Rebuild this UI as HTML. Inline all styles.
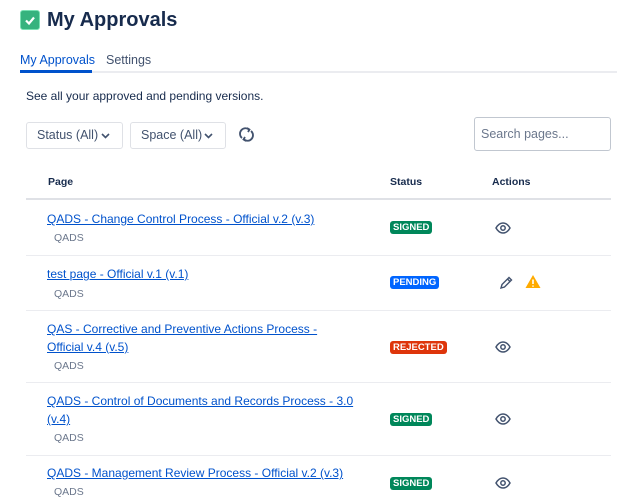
<!DOCTYPE html>
<html><head><style>
*{margin:0;padding:0;box-sizing:border-box}
body{width:640px;height:496px;overflow:hidden;background:#fff;font-family:"Liberation Sans",sans-serif;color:#172b4d;position:relative}
.a{position:absolute}
.lnk{color:#0052cc;text-decoration:underline;font-size:12px;line-height:18px}
.q{font-size:10.5px;color:#6b778c}
.b{position:absolute;left:390px;height:13px;padding:0 3px;border-radius:3px;color:#fff;font-size:9.5px;font-weight:bold;line-height:13px}
.line{position:absolute;left:26px;width:585px;height:1px;background:#ebecf0}
.sel{position:absolute;top:122px;height:27px;border:1px solid #dfe1e6;border-radius:3px;font-size:12.5px;color:#42526e;line-height:25px;padding-left:10px}
.sel svg{position:absolute;right:12px;top:10px}
</style></head><body>
<div class="a" style="left:20px;top:10px;width:20px;height:20px;background:#36b37e;border-radius:3px;border:1px solid #79e2b3"></div>
<svg class="a" style="left:20px;top:10px" width="20" height="20"><path d="M6 10.5l3 3 5-6" stroke="#fff" stroke-width="2.2" fill="none"/></svg>
<div class="a" style="left:47px;top:9px;font-size:20px;font-weight:bold;color:#172b4d">My Approvals</div>
<div class="a" style="left:20px;top:53px;font-size:12.5px;color:#0052cc">My Approvals</div>
<div class="a" style="left:106px;top:53px;font-size:12.5px;color:#42526e">Settings</div>
<div class="a" style="left:20px;top:71px;width:597px;height:2px;background:#ebecf0"></div>
<div class="a" style="left:20px;top:70px;width:72px;height:3px;background:#0052cc"></div>
<div class="a" style="left:26px;top:89px;font-size:12px;color:#172b4d">See all your approved and pending versions.</div>
<div class="sel" style="left:26px;width:97px">Status (All)<svg width="9" height="6"><path d="M1 1l3.5 3.5L8 1" stroke="#42526e" stroke-width="1.6" fill="none"/></svg></div>
<div class="sel" style="left:130px;width:96px">Space (All)<svg width="9" height="6"><path d="M1 1l3.5 3.5L8 1" stroke="#42526e" stroke-width="1.6" fill="none"/></svg></div>
<svg class="a" style="left:238px;top:126px" width="17" height="17" fill="none" stroke="#42526e" stroke-width="1.8"><path d="M4 12A5.5 5.5 0 0 1 11 3.5M13 5A5.5 5.5 0 0 1 6 13.5"/><path d="M9 2l2.5 1.5L10 6M8 15l-2.5-1.5L7 11"/></svg>
<div class="a" style="left:474px;top:117px;width:137px;height:34px;border:1px solid #c1c7d0;border-radius:3px;font-size:12.5px;color:#6b778c;line-height:32px;padding-left:6px">Search pages...</div>
<div class="a" style="left:48px;top:176px;font-size:10.5px;font-weight:bold">Page</div>
<div class="a" style="left:390px;top:176px;font-size:10.5px;font-weight:bold">Status</div>
<div class="a" style="left:492px;top:176px;font-size:10.5px;font-weight:bold">Actions</div>
<div class="line" style="top:198px;height:2px;background:#dfe1e6"></div>

<div class="a lnk" style="left:47px;top:210px">QADS - Change Control Process - Official v.2 (v.3)</div>
<div class="a q" style="left:54px;top:232px">QADS</div>
<div class="b" style="top:221px;background:#00875a">SIGNED</div>
<div class="line" style="top:255px"></div>

<div class="a lnk" style="left:47px;top:265px">test page - Official v.1 (v.1)</div>
<div class="a q" style="left:54px;top:288px">QADS</div>
<div class="b" style="top:276px;background:#0065ff">PENDING</div>
<svg class="a" style="left:498px;top:275px" width="16" height="16" fill="none" stroke="#42526e" stroke-width="1.4"><path d="M3 13l1-3.5L11 2.5l2.5 2.5-7 7z M9.5 4l2.5 2.5"/></svg>
<svg class="a" style="left:525px;top:274px" width="16" height="15"><path d="M8 1L15.5 14H.5z" fill="#ffab00"/><path d="M8 5.5v4.5M8 11.5v1.3" stroke="#fff" stroke-width="1.6"/></svg>
<div class="line" style="top:310px"></div>

<div class="a lnk" style="left:47px;top:320px">QAS - Corrective and Preventive Actions Process -<br>Official v.4 (v.5)</div>
<div class="a q" style="left:54px;top:360px">QADS</div>
<div class="b" style="top:341px;background:#de350b">REJECTED</div>
<div class="line" style="top:382px"></div>

<div class="a lnk" style="left:47px;top:392px">QADS - Control of Documents and Records Process - 3.0<br>(v.4)</div>
<div class="a q" style="left:54px;top:432px">QADS</div>
<div class="b" style="top:413px;background:#00875a">SIGNED</div>
<div class="line" style="top:455px"></div>

<div class="a lnk" style="left:47px;top:464px">QADS - Management Review Process - Official v.2 (v.3)</div>
<div class="a q" style="left:54px;top:486px">QADS</div>
<div class="b" style="top:477px;background:#00875a">SIGNED</div>

<svg width="0" height="0" style="position:absolute"><defs><g id="eye" fill="none" stroke="#42526e" stroke-width="1.5"><path d="M1 7C3 3.5 5.5 2 8 2s5 1.5 7 5c-2 3.5-4.5 5-7 5S3 10.5 1 7z"/><circle cx="8" cy="7" r="2.2"/></g></defs></svg>
<svg class="a" style="left:495px;top:221px" width="16" height="14"><use href="#eye"/></svg>
<svg class="a" style="left:495px;top:340px" width="16" height="14"><use href="#eye"/></svg>
<svg class="a" style="left:495px;top:412px" width="16" height="14"><use href="#eye"/></svg>
<svg class="a" style="left:495px;top:476px" width="16" height="14"><use href="#eye"/></svg>
</body></html>
